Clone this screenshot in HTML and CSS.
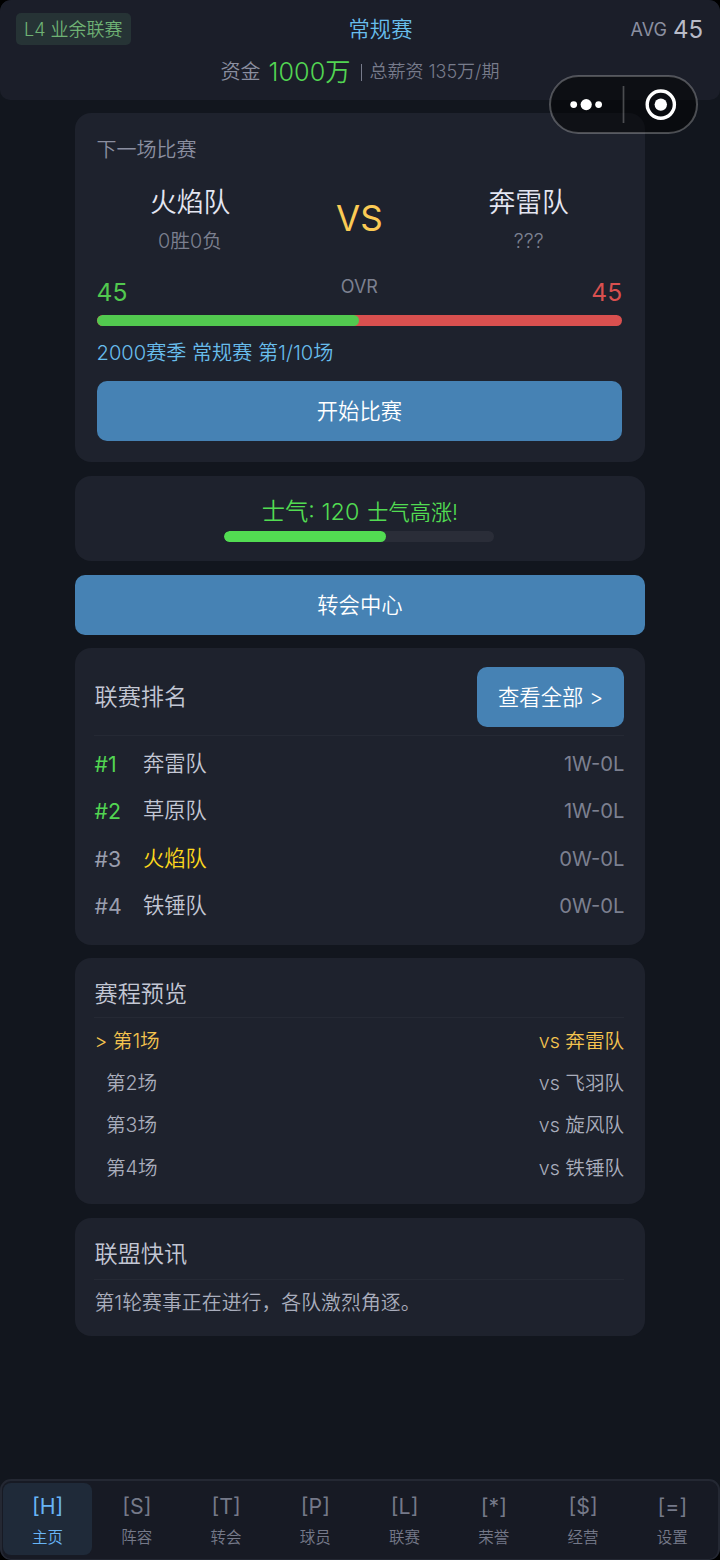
FILE: index.html
```html
<!DOCTYPE html>
<html lang="zh-CN">
<head>
<meta charset="utf-8">
<title>常规赛</title>
<link rel="stylesheet" href="styles.css">
</head>
<body>
<div class="app">
  <header class="top">
    <div class="top-row">
      <span class="league">L4 业余联赛</span>
      <span class="stage">常规赛</span>
      <span class="avg"><span>AVG</span><b>45</b></span>
    </div>
    <div class="money"><span class="money-label">资金</span><span class="money-value">1000万</span><i class="money-sep"></i><span class="salary">总薪资 135万/期</span></div>
  </header>
  <div class="capsule">
    <svg width="149" height="59" viewBox="0 0 149 59">
      <rect x="1" y="1" width="147" height="57" rx="28.5" fill="#000" fill-opacity=".5" stroke="#fff" stroke-opacity=".26" stroke-width="2"/>
      <path d="M74.5 11v37" stroke="#fff" stroke-opacity=".26" stroke-width="1.7"/>
      <g fill="#fff"><circle cx="24.7" cy="29.6" r="3.4"/><circle cx="37.2" cy="29.6" r="5.6"/><circle cx="49.6" cy="29.6" r="3.4"/><circle cx="111.8" cy="29.6" r="6.2"/></g>
      <circle cx="111.8" cy="29.6" r="13.6" fill="none" stroke="#fff" stroke-width="3.4"/>
    </svg>
  </div>

  <main class="main">
    <section class="card match">
      <div class="match-title">下一场比赛</div>
      <div class="teams">
        <div class="team"><div class="team-name">火焰队</div><div class="team-sub">0胜0负</div></div>
        <div class="vs">VS</div>
        <div class="team"><div class="team-name">奔雷队</div><div class="team-sub">???</div></div>
      </div>
      <div class="ratings"><span class="home">45</span><span class="ovr">OVR</span><span class="away">45</span></div>
      <div class="bar versus"><div class="fill"></div></div>
      <div class="round">2000赛季 常规赛 第1/10场</div>
      <button class="btn">开始比赛</button>
    </section>

    <section class="card morale">
      <div class="morale-text"><span>士气: 120</span><span class="morale-note">士气高涨!</span></div>
      <div class="bar morale-bar"><div class="fill"></div></div>
    </section>

    <button class="btn">转会中心</button>

    <section class="card standings">
      <div class="standings-head"><h2>联赛排名</h2><button class="btn small">查看全部 &gt;</button></div>
      <div class="rank top-rank"><span class="pos">#1</span><span class="name">奔雷队</span><span class="record">1W-0L</span></div>
      <div class="rank top-rank"><span class="pos">#2</span><span class="name">草原队</span><span class="record">1W-0L</span></div>
      <div class="rank mine"><span class="pos">#3</span><span class="name">火焰队</span><span class="record">0W-0L</span></div>
      <div class="rank"><span class="pos">#4</span><span class="name">铁锤队</span><span class="record">0W-0L</span></div>
    </section>

    <section class="card schedule">
      <h2 class="ruled">赛程预览</h2>
      <div class="game next"><span>&gt; 第1场</span><span>vs 奔雷队</span></div>
      <div class="game"><span>第2场</span><span>vs 飞羽队</span></div>
      <div class="game"><span>第3场</span><span>vs 旋风队</span></div>
      <div class="game"><span>第4场</span><span>vs 铁锤队</span></div>
    </section>

    <section class="card news">
      <h2 class="ruled">联盟快讯</h2>
      <p>第1轮赛事正在进行，各队激烈角逐。</p>
    </section>
  </main>

  <nav class="tabs">
    <a class="tab active"><span>[H]</span><small>主页</small></a>
    <a class="tab"><span>[S]</span><small>阵容</small></a>
    <a class="tab"><span>[T]</span><small>转会</small></a>
    <a class="tab"><span>[P]</span><small>球员</small></a>
    <a class="tab"><span>[L]</span><small>联赛</small></a>
    <a class="tab"><span>[*]</span><small>荣誉</small></a>
    <a class="tab"><span>[$]</span><small>经营</small></a>
    <a class="tab"><span>[=]</span><small>设置</small></a>
  </nav>
</div>
</body>
</html>
```
FILE: styles.css
```css
* { box-sizing: border-box; }
body {
  margin: 0;
  background: #000;
  color: #c3c7d4;
  font-family: Inter, "Noto Sans CJK SC", sans-serif;
  font-weight: 350;
}
h2, p { margin: 0; font-weight: inherit; }
.app {
  position: relative;
  display: flex;
  flex-direction: column;
  width: 720px;
  height: 1560px;
  overflow: hidden;
  border-radius: 11px;
  background: #12161e;
  white-space: nowrap;
}

/* Header */
.top {
  flex: none;
  height: 100px;
  padding: 13px 16px 0;
  border-radius: 10px;
  background: #1b1e29;
}
.top-row {
  display: flex;
  justify-content: space-between;
  align-items: center;
  height: 32px;
}
.league {
  height: 32px;
  padding: 0 8px;
  border-radius: 5px;
  background: #263335;
  color: #6fb274;
  font-size: 18px;
  line-height: 33px;
}
.stage { color: #68bdec; font-size: 21.3px; line-height: 32px; }
.avg {
  display: flex;
  align-items: center;
  gap: 6px;
  padding-right: 1px;
  color: #8b8fa0;
  font-size: 18px;
  font-weight: 400;
}
.avg b { color: #b8bbc8; font-size: 24px; font-weight: inherit; }
.money {
  display: flex;
  justify-content: center;
  align-items: center;
  height: 32px;
  margin-top: 11px;
  font-size: 20px;
  line-height: 32px;
  color: #8b8fa0;
}
.money-value { margin-left: 8px; color: #52d552; font-size: 25.2px; line-height: 30px; }
.money-sep { width: 1px; height: 17px; margin: 0 7px 0 11px; background: #777b8b; }
.salary { color: #777b8b; font-size: 18px; }
.capsule { position: absolute; left: 549px; top: 74.5px; height: 59px; }

/* Cards */
.main {
  display: flex;
  flex-direction: column;
  gap: 13.7px;
  width: 569.4px;
  margin: 13px 0 0 75.2px;
}
.card { border-radius: 16px; background: #1e222d; }
.btn {
  display: block;
  flex: none;
  width: 100%;
  height: 60px;
  padding: 0 0 3px;
  border: 0;
  border-radius: 10px;
  background: #4682b4;
  color: #fff;
  font: inherit;
  font-size: 21.3px;
}
.main > .btn { margin: 0.5px 0 -0.5px; padding-bottom: 2px; }
.bar { height: 11px; border-radius: 5.5px; overflow: hidden; }
.fill { height: 100%; border-radius: 5.5px; }

.match { height: 349px; padding: 22px 22.4px 20px 21.4px; }
.match-title { color: #8b8fa0; font-size: 20px; line-height: 30px; }
.teams { display: flex; align-items: center; height: 72px; margin-top: 19px; text-align: center; }
.team { width: 187px; }
.team-name { color: #e4e6f2; font-size: 26.8px; line-height: 36px; }
.team-sub { margin-top: 6px; color: #7c8090; font-size: 19.8px; line-height: 30px; }
.vs { flex: 1; color: #fbcb55; font-size: 35px; font-weight: 400; line-height: 40px; padding-bottom: 5px; }
.ratings {
  display: grid;
  grid-template-columns: 1fr auto 1fr;
  height: 32px;
  margin-top: 20px;
  font-size: 24.6px;
  font-weight: 400;
  line-height: 32px;
}
.home { color: #52c94f; }
.ovr { color: #7c8090; font-size: 18px; line-height: 22px; }
.away { color: #d9504f; text-align: right; }
.versus { margin-top: 7px; background: #d9504f; }
.versus .fill { width: 50%; background: #52c94f; }
.round { margin: 12px 0 13px; color: #68bdec; font-size: 20.1px; line-height: 30px; }

.morale { display: flex; flex-direction: column; align-items: center; height: 85px; padding-top: 20px; }
.morale-text { display: flex; align-items: center; gap: 8px; height: 29px; color: #52dc52; font-size: 23.3px; }
.morale-note { font-size: 21.2px; }
.morale-bar { width: 270px; margin: 6px 1px 0 0; background: #2a2d38; }
.morale-bar .fill { width: 60%; background: #52dc52; }

h2 { color: #c3c7d4; font-size: 23.2px; line-height: 32px; }
.standings { height: 296.5px; padding: 19px 20.2px 0 19.3px; }
.standings-head {
  display: flex;
  justify-content: space-between;
  align-items: center;
  height: 69px;
  padding-bottom: 8px;
  margin-bottom: 4px;
  border-bottom: 1px solid #252934;
}
.small { width: 147.6px; }
.rank { display: flex; align-items: center; height: 47.4px; font-size: 21.3px; line-height: 30px; }
.pos { width: 48.5px; color: #9a9eae; font-weight: 400; }
.name { padding-bottom: 2px; }
.top-rank .pos { color: #52d552; }
.mine .name { color: #fcd81c; }
.record { margin-left: auto; color: #7c8090; font-size: 20.2px; font-weight: 400; }

.ruled { border-bottom: 1px solid #252934; }
.schedule { height: 246px; padding: 20px 20.5px 0 19.3px; }
.schedule h2 { height: 40px; }
.game {
  display: flex;
  justify-content: space-between;
  align-items: center;
  height: 42.3px;
  padding-left: 11.5px;
  color: #a9adbc;
  font-size: 19.6px;
}
.next { padding-left: 0; color: #f5c44f; }

.news { height: 118px; padding: 20px 20.5px 0 19.3px; }
.news h2 { height: 42px; }
.news p { margin-top: 8px; color: #a9adbc; font-size: 19.9px; line-height: 30px; }

/* Tab bar */
.tabs {
  display: flex;
  flex: none;
  height: 81px;
  margin-top: auto;
  padding: 2px 1px 0;
  border: 2px solid #242833;
  border-bottom-width: 1px;
  border-radius: 11px;
  background: #171a24;
}
.tab {
  display: flex;
  flex: 1;
  flex-direction: column;
  align-items: center;
  height: 72px;
  border-radius: 8px;
  color: #757989;
}
.tab span { margin-top: 8px; font-size: 21.3px; font-weight: 400; line-height: 30px; }
.tab small { margin-top: 5px; font-size: 15.5px; line-height: 23px; }
.active { background: #1f2a39; color: #68b4f6; }
```
